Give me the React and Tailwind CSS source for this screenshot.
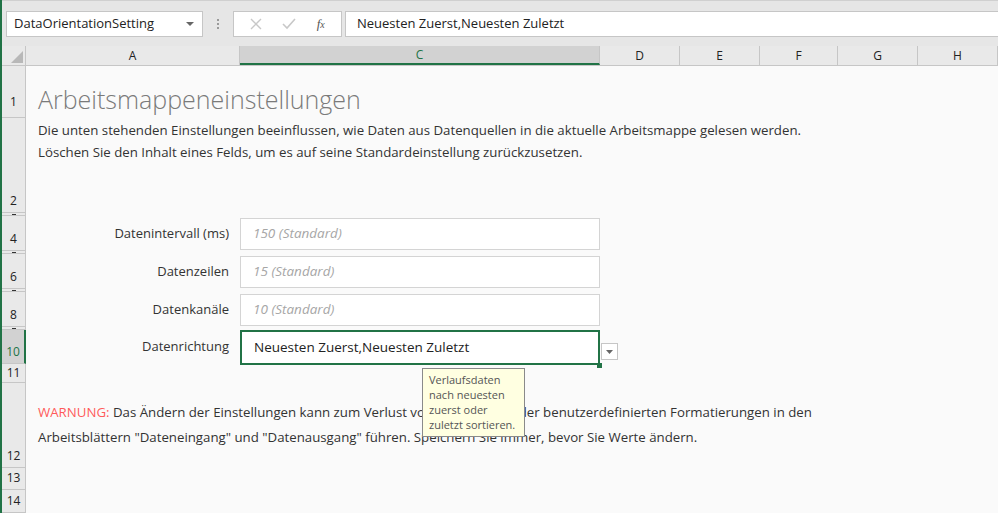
import React from 'react';

const font = { fontFamily: '"Open Sans", "Noto Sans", sans-serif' };

const columns = [
  { name: 'A', w: 'w-[214px]' },
  { name: 'C', w: 'w-[360px]', active: true },
  { name: 'D', w: 'w-[80px]' },
  { name: 'E', w: 'w-[80px]' },
  { name: 'F', w: 'w-[78px]' },
  { name: 'G', w: 'w-[80px]' },
  { name: 'H', w: 'flex-1' },
];

const RowHead = ({ label, h, active, pb = 'pb-[2px]' }) => (
  <div
    className={`w-[24px] shrink-0 ${h} flex items-end justify-center ${pb} text-[12px] border-b border-[#c6c6c6] ${
      active ? 'bg-[#d2d2d2] text-[#217346] border-r-2 border-r-[#217346]' : 'bg-[#e9e9e9] text-[#222] border-r border-r-[#c6c6c6]'
    }`}
  >
    {label}
  </div>
);

const Field = ({ label, placeholder, value, active }) => (
  <>
    <div className="w-[214px] shrink-0 flex items-center justify-end pr-[11px] text-[13px] text-[#333]">{label}</div>
    <div className="relative w-[360px] shrink-0 h-full flex items-center">
      <div
        className={`w-full flex items-center bg-white pl-[12px] ${
          active ? 'h-[35px] border-2 border-[#217346] text-[13.5px] text-[#222]' : 'h-[32px] border border-[#d4d4d4] text-[13.5px] italic text-[#a6a6a6]'
        }`}
      >
        {value || placeholder}
      </div>
      {active && (
        <>
          <div className="absolute right-[-2px] bottom-[-4px] w-[5px] h-[5px] bg-[#217346]" />
          <div className="absolute left-[361px] top-[13px] w-[17px] h-[17px] bg-white border border-[#c6c6c6] flex items-center justify-center">
            <svg width="7" height="4" viewBox="0 0 7 4"><path d="M0 0h7L3.5 4z" fill="#666" /></svg>
          </div>
        </>
      )}
    </div>
  </>
);

const Hidden = () => (
  <div className="flex h-[3px]">
    <div className="w-[24px] shrink-0 bg-[#e9e9e9] border-b border-r border-[#c6c6c6] flex justify-center">
      <div className="w-[4px] h-[1px] bg-[#333] mt-[1px]" />
    </div>
  </div>
);

export default function App() {
  return (
    <div className="relative w-[998px] h-[513px] overflow-hidden bg-[#fafafa] border-l-2 border-[#217346]" style={font}>
      {/* top bar */}
      <div className="h-[46px] bg-[#e6e6e6] border-t border-[#d0d0d0] flex items-center pl-[4px] pr-0 gap-0">
        <div className="w-[197px] h-[26px] bg-white border border-[#c6c6c6] flex items-center justify-between pl-[7px] pr-[8px] text-[13px] text-[#222]">
          <span>DataOrientationSetting</span>
          <svg width="8" height="4" viewBox="0 0 8 4"><path d="M0 0h8L4 4z" fill="#666" /></svg>
        </div>
        <div className="w-[30px] flex flex-col items-center gap-[2px]">
          <div className="w-[2px] h-[2px] bg-[#9a9a9a]" />
          <div className="w-[2px] h-[2px] bg-[#9a9a9a]" />
          <div className="w-[2px] h-[2px] bg-[#9a9a9a]" />
        </div>
        <div className="w-[109px] h-[26px] bg-white border border-[#c6c6c6] flex items-center justify-around px-[6px]">
          <svg width="12" height="12" viewBox="0 0 12 12"><path d="M1 1l10 10M11 1L1 11" stroke="#c8c8c8" strokeWidth="1.4" /></svg>
          <svg width="14" height="12" viewBox="0 0 14 12"><path d="M1 6l4 4 8-9" stroke="#c8c8c8" strokeWidth="1.6" fill="none" /></svg>
          <span className="text-[13px] italic text-[#555]" style={{ fontFamily: '"Liberation Serif", serif' }}>f<span className="text-[10px]">x</span></span>
        </div>
        <div className="flex-1 ml-[3px] h-[26px] bg-white border border-[#c6c6c6] border-r-0 flex items-center pl-[11px] text-[13px] text-[#222]">
          Neuesten Zuerst,Neuesten Zuletzt
        </div>
      </div>

      {/* column headers */}
      <div className="flex h-[20px] bg-[#e9e9e9] border-b border-[#c6c6c6]">
        <div className="w-[24px] shrink-0 border-r border-[#c6c6c6] flex items-end justify-end p-[2px]">
          <svg width="12" height="12" viewBox="0 0 12 12"><path d="M12 0v12H0z" fill="#b8b8b8" /></svg>
        </div>
        {columns.map((c) => (
          <div
            key={c.name}
            className={`${c.w} shrink-0 flex items-center justify-center text-[12px] border-r border-[#c6c6c6] ${
              c.active ? 'bg-[#d2d2d2] text-[#217346] border-b-2 border-b-[#217346]' : 'text-[#222]'
            }`}
          >
            {c.name}
          </div>
        ))}
      </div>

      {/* row 1 */}
      <div className="flex">
        <RowHead label="1" h="h-[52px]" pb="pb-[6px]" />
        <div className="pl-[12px] pt-[21px] text-[25px] font-light text-[#7a7a7a] leading-none">Arbeitsmappeneinstellungen</div>
      </div>

      {/* row 2 */}
      <div className="flex">
        <RowHead label="2" h="h-[95px]" />
        <div className="pl-[12px] pt-[1px] text-[13.25px] leading-[22px] text-[#333]">
          <div>Die unten stehenden Einstellungen beeinflussen, wie Daten aus Datenquellen in die aktuelle Arbeitsmappe gelesen werden.</div>
          <div>Löschen Sie den Inhalt eines Felds, um es auf seine Standardeinstellung zurückzusetzen.</div>
        </div>
      </div>
      <Hidden />

      <div className="flex h-[35px]">
        <RowHead label="4" h="h-[35px]" />
        <Field label="Datenintervall (ms)" placeholder="150 (Standard)" />
      </div>
      <Hidden />
      <div className="flex h-[35px]">
        <RowHead label="6" h="h-[35px]" />
        <Field label="Datenzeilen" placeholder="15 (Standard)" />
      </div>
      <Hidden />
      <div className="flex h-[35px]">
        <RowHead label="8" h="h-[35px]" />
        <Field label="Datenkanäle" placeholder="10 (Standard)" />
      </div>
      <Hidden />
      <div className="flex h-[34px]">
        <RowHead label="10" h="h-[34px]" active />
        <Field label="Datenrichtung" value="Neuesten Zuerst,Neuesten Zuletzt" active />
      </div>

      <div className="flex">
        <RowHead label="11" h="h-[19px]" pb="pb-0" />
      </div>
      <div className="flex">
        <RowHead label="12" h="h-[85px]" />
        <div className="pl-[12px] pt-[17px] text-[13.25px] leading-[25px] text-[#333]">
          <div>
            <span className="text-[#ff5a5a]">WARNUNG:</span> Das Ändern der Einstellungen kann zum Verlust von Daten- und/oder benutzerdefinierten Formatierungen in den
          </div>
          <div>Arbeitsblättern "Dateneingang" und "Datenausgang" führen. Speichern Sie immer, bevor Sie Werte ändern.</div>
        </div>
      </div>
      <div className="flex">
        <RowHead label="13" h="h-[22px]" />
      </div>
      <div className="flex">
        <RowHead label="14" h="h-[23px]" />
      </div>

      {/* tooltip */}
      <div className="absolute left-[420px] top-[368px] w-[103px] h-[69px] bg-[#ffffe1] border border-[#8a8a8a] pl-[6px] pr-[3px] pt-[3px] text-[11px] leading-[15px] text-[#555]">
        Verlaufsdaten nach neuesten zuerst oder zuletzt sortieren.
      </div>
    </div>
  );
}
